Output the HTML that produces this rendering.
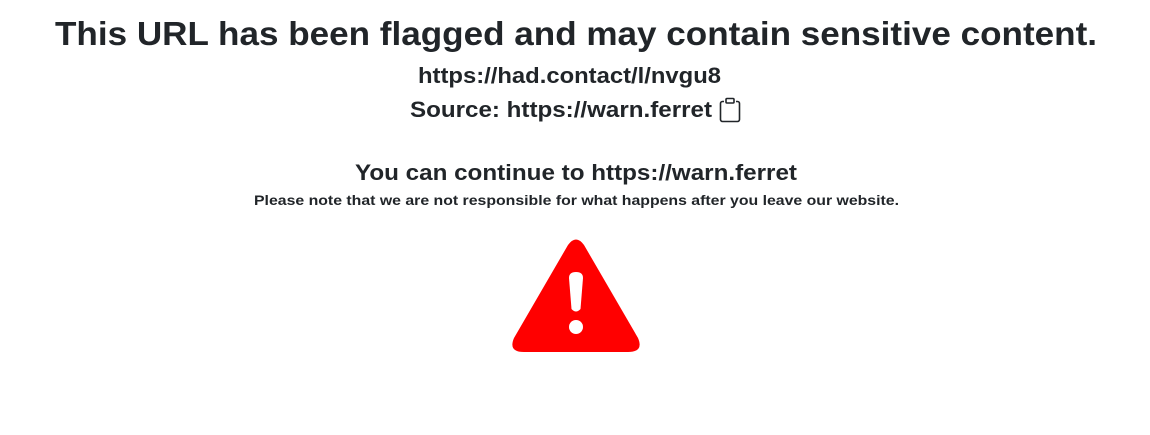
<!DOCTYPE html>
<html><head><style>html,body{margin:0;background:#fff;width:1150px;height:435px;overflow:hidden}</style></head>
<body>
<svg width="1150" height="435" xmlns="http://www.w3.org/2000/svg" style="display:block">
<g font-family="Liberation Sans, sans-serif" font-weight="bold" fill="#212529">
<text x="55" y="45" font-size="33" textLength="1042" lengthAdjust="spacingAndGlyphs">This URL has been flagged and may contain sensitive content.</text>
<text x="418" y="83" font-size="22" textLength="303" lengthAdjust="spacingAndGlyphs">https://had.contact/l/nvgu8</text>
<text x="410" y="117" font-size="22" textLength="302" lengthAdjust="spacingAndGlyphs">Source: https://warn.ferret</text>
<text x="355" y="180" font-size="22" textLength="442" lengthAdjust="spacingAndGlyphs">You can continue to https://warn.ferret</text>
<text x="254" y="205" font-size="14" textLength="645" lengthAdjust="spacingAndGlyphs">Please note that we are not responsible for what happens after you leave our website.</text>
</g>
<g fill="none" stroke="#212529" stroke-width="1.6">
<path d="M724 101.5h-1.5a2 2 0 0 0-2 2v16a2 2 0 0 0 2 2h15a2 2 0 0 0 2-2v-16a2 2 0 0 0-2-2h-1.5"/>
<rect x="726" y="98.5" width="8" height="4.5" rx="1"/>
</g>
<path d="M568 245 Q576 234 584 245 L638 338 Q644 352 628 352 L524 352 Q508 352 514 338 Z" fill="#f00"/>
<path d="M569 278 Q569 272 576 272 Q583 272 583 278 L580.5 309 Q576 314 571.5 309 Z" fill="#fff"/>
<circle cx="576" cy="327" r="7" fill="#fff"/>
</svg>
</body></html>
